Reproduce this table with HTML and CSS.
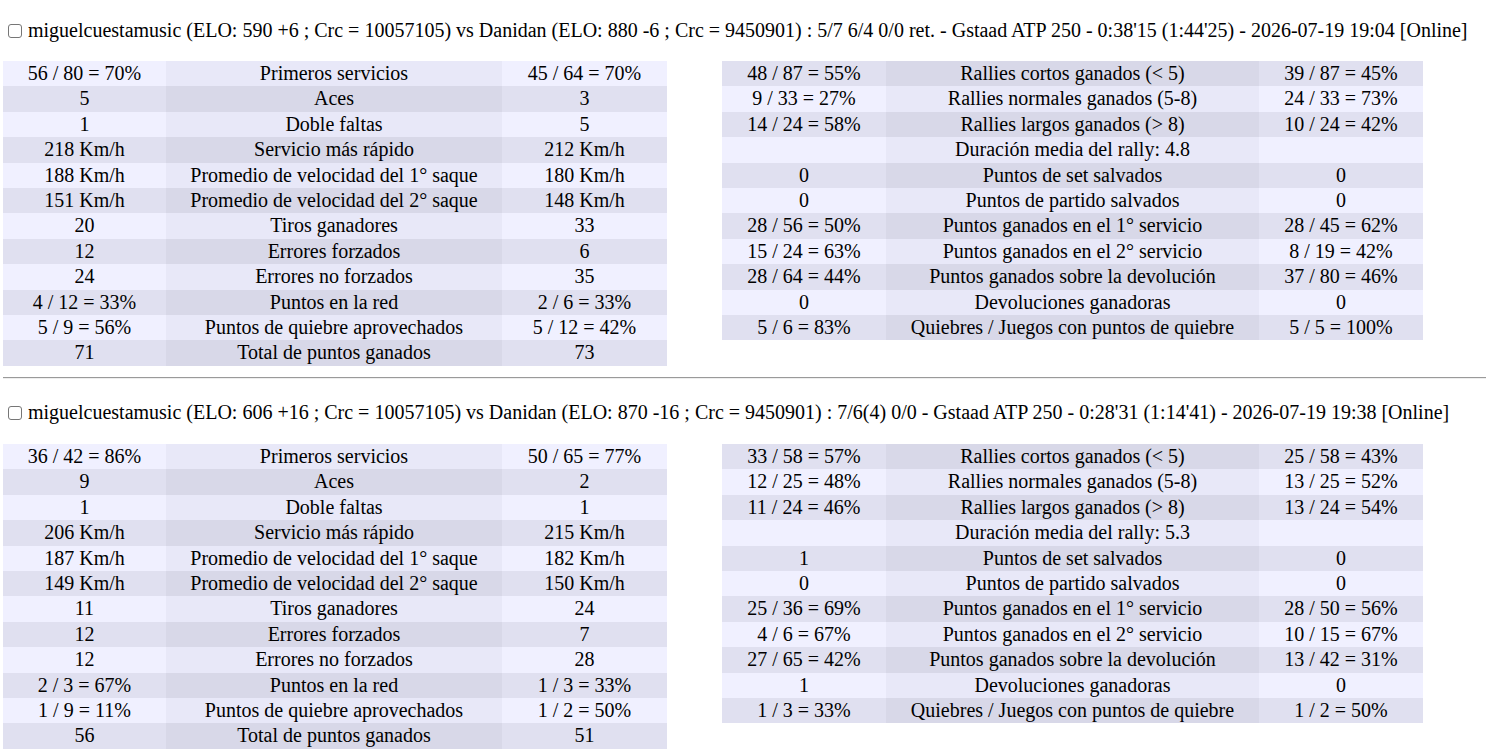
FILE: index.html
```html
<!DOCTYPE html>
<html>
<head>
<meta charset="utf-8">
<link rel="stylesheet" href="styles.css">
</head>
<body>
<div class="page">
  <div class="match first">
    <div class="title"><input type="checkbox" class="chk"> miguelcuestamusic (ELO: 590 +6 ; Crc = 10057105) vs Danidan (ELO: 880 -6 ; Crc = 9450901) : 5/7 6/4 0/0 ret. - Gstaad ATP 250 - 0:38'15 (1:44'25) - 2026-07-19 19:04 [Online]</div>
    <div class="tables">
      <table class="stats left">
        <tr class="l"><td>56 / 80 = 70%</td><td class="mid">Primeros servicios</td><td>45 / 64 = 70%</td></tr>
        <tr class="d"><td>5</td><td class="mid">Aces</td><td>3</td></tr>
        <tr class="l"><td>1</td><td class="mid">Doble faltas</td><td>5</td></tr>
        <tr class="d"><td>218 Km/h</td><td class="mid">Servicio más rápido</td><td>212 Km/h</td></tr>
        <tr class="l"><td>188 Km/h</td><td class="mid">Promedio de velocidad del 1° saque</td><td>180 Km/h</td></tr>
        <tr class="d"><td>151 Km/h</td><td class="mid">Promedio de velocidad del 2° saque</td><td>148 Km/h</td></tr>
        <tr class="l"><td>20</td><td class="mid">Tiros ganadores</td><td>33</td></tr>
        <tr class="d"><td>12</td><td class="mid">Errores forzados</td><td>6</td></tr>
        <tr class="l"><td>24</td><td class="mid">Errores no forzados</td><td>35</td></tr>
        <tr class="d"><td>4 / 12 = 33%</td><td class="mid">Puntos en la red</td><td>2 / 6 = 33%</td></tr>
        <tr class="l"><td>5 / 9 = 56%</td><td class="mid">Puntos de quiebre aprovechados</td><td>5 / 12 = 42%</td></tr>
        <tr class="d"><td>71</td><td class="mid">Total de puntos ganados</td><td>73</td></tr>
      </table>
      <table class="stats right">
        <tr class="d"><td>48 / 87 = 55%</td><td class="mid">Rallies cortos ganados (&lt; 5)</td><td>39 / 87 = 45%</td></tr>
        <tr class="l"><td>9 / 33 = 27%</td><td class="mid">Rallies normales ganados (5-8)</td><td>24 / 33 = 73%</td></tr>
        <tr class="d"><td>14 / 24 = 58%</td><td class="mid">Rallies largos ganados (&gt; 8)</td><td>10 / 24 = 42%</td></tr>
        <tr class="l"><td></td><td class="mid">Duración media del rally: 4.8</td><td></td></tr>
        <tr class="d"><td>0</td><td class="mid">Puntos de set salvados</td><td>0</td></tr>
        <tr class="l"><td>0</td><td class="mid">Puntos de partido salvados</td><td>0</td></tr>
        <tr class="d"><td>28 / 56 = 50%</td><td class="mid">Puntos ganados en el 1° servicio</td><td>28 / 45 = 62%</td></tr>
        <tr class="l"><td>15 / 24 = 63%</td><td class="mid">Puntos ganados en el 2° servicio</td><td>8 / 19 = 42%</td></tr>
        <tr class="d"><td>28 / 64 = 44%</td><td class="mid">Puntos ganados sobre la devolución</td><td>37 / 80 = 46%</td></tr>
        <tr class="l"><td>0</td><td class="mid">Devoluciones ganadoras</td><td>0</td></tr>
        <tr class="d"><td>5 / 6 = 83%</td><td class="mid">Quiebres / Juegos con puntos de quiebre</td><td>5 / 5 = 100%</td></tr>
      </table>
    </div>
  </div>
  <hr class="sep">
  <div class="match second">
    <div class="title"><input type="checkbox" class="chk"> miguelcuestamusic (ELO: 606 +16 ; Crc = 10057105) vs Danidan (ELO: 870 -16 ; Crc = 9450901) : 7/6(4) 0/0 - Gstaad ATP 250 - 0:28'31 (1:14'41) - 2026-07-19 19:38 [Online]</div>
    <div class="tables">
      <table class="stats left">
        <tr class="l"><td>36 / 42 = 86%</td><td class="mid">Primeros servicios</td><td>50 / 65 = 77%</td></tr>
        <tr class="d"><td>9</td><td class="mid">Aces</td><td>2</td></tr>
        <tr class="l"><td>1</td><td class="mid">Doble faltas</td><td>1</td></tr>
        <tr class="d"><td>206 Km/h</td><td class="mid">Servicio más rápido</td><td>215 Km/h</td></tr>
        <tr class="l"><td>187 Km/h</td><td class="mid">Promedio de velocidad del 1° saque</td><td>182 Km/h</td></tr>
        <tr class="d"><td>149 Km/h</td><td class="mid">Promedio de velocidad del 2° saque</td><td>150 Km/h</td></tr>
        <tr class="l"><td>11</td><td class="mid">Tiros ganadores</td><td>24</td></tr>
        <tr class="d"><td>12</td><td class="mid">Errores forzados</td><td>7</td></tr>
        <tr class="l"><td>12</td><td class="mid">Errores no forzados</td><td>28</td></tr>
        <tr class="d"><td>2 / 3 = 67%</td><td class="mid">Puntos en la red</td><td>1 / 3 = 33%</td></tr>
        <tr class="l"><td>1 / 9 = 11%</td><td class="mid">Puntos de quiebre aprovechados</td><td>1 / 2 = 50%</td></tr>
        <tr class="d"><td>56</td><td class="mid">Total de puntos ganados</td><td>51</td></tr>
      </table>
      <table class="stats right">
        <tr class="d"><td>33 / 58 = 57%</td><td class="mid">Rallies cortos ganados (&lt; 5)</td><td>25 / 58 = 43%</td></tr>
        <tr class="l"><td>12 / 25 = 48%</td><td class="mid">Rallies normales ganados (5-8)</td><td>13 / 25 = 52%</td></tr>
        <tr class="d"><td>11 / 24 = 46%</td><td class="mid">Rallies largos ganados (&gt; 8)</td><td>13 / 24 = 54%</td></tr>
        <tr class="l"><td></td><td class="mid">Duración media del rally: 5.3</td><td></td></tr>
        <tr class="d"><td>1</td><td class="mid">Puntos de set salvados</td><td>0</td></tr>
        <tr class="l"><td>0</td><td class="mid">Puntos de partido salvados</td><td>0</td></tr>
        <tr class="d"><td>25 / 36 = 69%</td><td class="mid">Puntos ganados en el 1° servicio</td><td>28 / 50 = 56%</td></tr>
        <tr class="l"><td>4 / 6 = 67%</td><td class="mid">Puntos ganados en el 2° servicio</td><td>10 / 15 = 67%</td></tr>
        <tr class="d"><td>27 / 65 = 42%</td><td class="mid">Puntos ganados sobre la devolución</td><td>13 / 42 = 31%</td></tr>
        <tr class="l"><td>1</td><td class="mid">Devoluciones ganadoras</td><td>0</td></tr>
        <tr class="d"><td>1 / 3 = 33%</td><td class="mid">Quiebres / Juegos con puntos de quiebre</td><td>1 / 2 = 50%</td></tr>
      </table>
    </div>
  </div>
</div>
</body>
</html>
```
FILE: styles.css
```css
html, body {
  margin: 0;
  padding: 0;
  background: #ffffff;
}
body {
  font-family: "Liberation Serif", "Times New Roman", serif;
  font-size: 20px;
  color: #000000;
}
.page {
  padding-left: 3px;
}
.match.first {
  padding-top: 19px;
}
.match.second {
  padding-top: 22px;
}
.title {
  line-height: 22px;
  height: 22px;
  white-space: nowrap;
  margin-bottom: 20px;
}
.match.second .title {
  margin-bottom: 21px;
}
.chk {
  -webkit-appearance: none;
  appearance: none;
  box-sizing: border-box;
  width: 14px;
  height: 14px;
  margin: 0 1px 0 5px;
  border: 1px solid #767676;
  border-radius: 3px;
  background: #ffffff;
  vertical-align: -1px;
}
.tables {
  display: flex;
  align-items: flex-start;
  gap: 55px;
}
.stats {
  border-collapse: collapse;
  border-spacing: 0;
  table-layout: fixed;
}
.stats td {
  padding: 1px 0;
  line-height: 23.4px;
  text-align: center;
  white-space: nowrap;
}
.stats.left { width: 664px; }
.stats.left td:nth-child(1) { width: 163px; }
.stats.left td:nth-child(2) { width: 336px; }
.stats.left td:nth-child(3) { width: 165px; }
.stats.right { width: 701px; }
.stats.right td:nth-child(1) { width: 164px; }
.stats.right td:nth-child(2) { width: 373px; }
.stats.right td:nth-child(3) { width: 164px; }
.stats tr.l td { background: #f0f0ff; }
.stats tr.l td.mid { background: #e8e8f8; }
.stats tr.d td { background: #e0e0f0; }
.stats tr.d td.mid { background: #d8d8e8; }
.sep {
  margin: 11px 0 0 0;
  height: 0;
  border: 0;
  border-top: 1px solid #9a9a9a;
  border-bottom: 1px solid #eeeeee;
}
```
